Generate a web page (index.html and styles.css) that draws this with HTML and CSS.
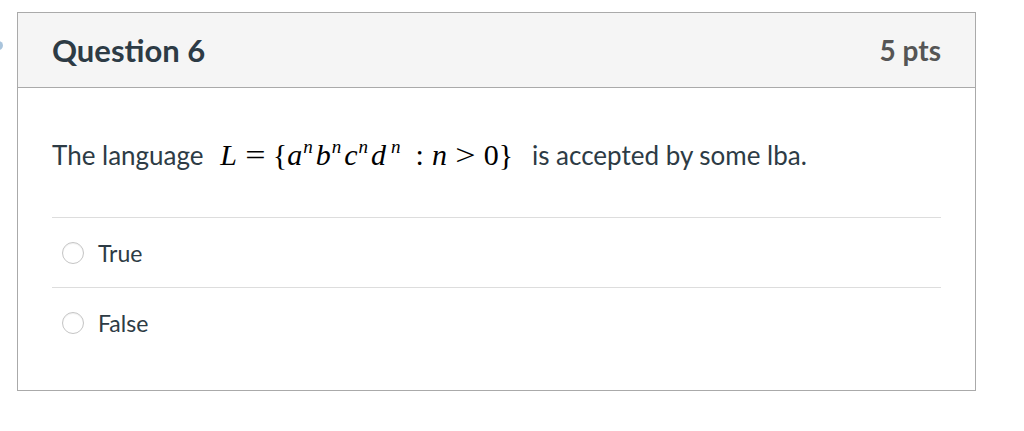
FILE: index.html
```html
<!DOCTYPE html>
<html>
<head>
<meta charset="utf-8">
<link rel="stylesheet" href="styles.css">
</head>
<body>
<div class="page">
  <span class="dot"></span>
  <div class="card">
    <div class="header">
      <h2 class="title">Question 6</h2>
      <div class="pts">5 pts</div>
    </div>
    <div class="body">
      <p class="question">The language <span class="math"><i class="L">L</i><span class="rel">=</span><span class="br">{</span><i>a</i><sup>n</sup><i>b</i><sup>n</sup><i>c</i><sup>n</sup><i>d</i><sup class="sp">n</sup><span class="colon">:</span><i>n</i><span class="rel gt">&gt;</span><span class="up">0</span><span class="br">}</span></span> is accepted by some lba.</p>
      <div class="answers">
        <label class="answer"><span class="radio"></span><span class="atext">True</span></label>
        <label class="answer"><span class="radio"></span><span class="atext">False</span></label>
      </div>
    </div>
  </div>
</div>
</body>
</html>
```
FILE: styles.css
```css
html, body {
  margin: 0;
  padding: 0;
  background: #ffffff;
}
.page {
  position: relative;
  padding: 12px 0 0 17px;
  font-family: Lato, "Open Sans", sans-serif;
}
.dot {
  position: absolute;
  left: -6px;
  top: 41px;
  width: 9px;
  height: 9px;
  border-radius: 50%;
  background: #a9c4dc;
}
.card {
  width: 957px;
  height: 377px;
  border: 1px solid #aaaaaa;
  box-sizing: content-box;
  display: flex;
  flex-direction: column;
}
.header {
  height: 74px;
  background: #f5f5f5;
  border-bottom: 1px solid #aaaaaa;
  display: flex;
  align-items: center;
  justify-content: space-between;
  padding: 0 34px 0 34px;
}
.title {
  margin: 0;
  font-size: 31px;
  font-weight: 700;
  color: #2d3b45;
}
.pts {
  font-size: 28px;
  font-weight: 700;
  color: #555555;
}
.body {
  padding: 0 34px 0 34px;
}
.question {
  margin: 0;
  height: 129px;
  padding-top: 4px;
  box-sizing: border-box;
  display: flex;
  align-items: center;
  font-size: 26px;
  color: #2d3b45;
  white-space: pre;
}
.math {
  font-family: "Liberation Serif", "DejaVu Serif", serif;
  font-size: 30px;
  color: #000;
  margin: 0 12px 0 10px;
  white-space: nowrap;
}
.math i {
  font-style: italic;
}
.math i.L {
  margin-right: 1px;
}
.math sup {
  font-style: italic;
  font-size: 19px;
  vertical-align: 0;
  position: relative;
  top: -12px;
  margin: 0 3px 0 1px;
}
.math sup.sp {
  margin-left: 5px;
}
.rel {
  display: inline-block;
  margin: 0 9px;
  transform: scaleX(1.2);
}
.rel.gt {
  margin: 0 10px;
}
.colon {
  margin: 0 8px 0 12px;
}
.up,
.br {
  font-style: normal;
}
.answers {
  border-top: 1px solid #dddddd;
}
.answer {
  display: flex;
  align-items: center;
  height: 69px;
  border-bottom: 1px solid #dddddd;
  padding-left: 10px;
  font-size: 23px;
  color: #2d3b45;
}
.answer:last-child {
  border-bottom: none;
}
.radio {
  width: 22px;
  height: 22px;
  border: 1px solid #c5c5c5;
  border-radius: 50%;
  box-sizing: border-box;
  margin-right: 14px;
  background: #fff;
  box-shadow: inset 0 1px 1px rgba(0, 0, 0, 0.06);
}
```
